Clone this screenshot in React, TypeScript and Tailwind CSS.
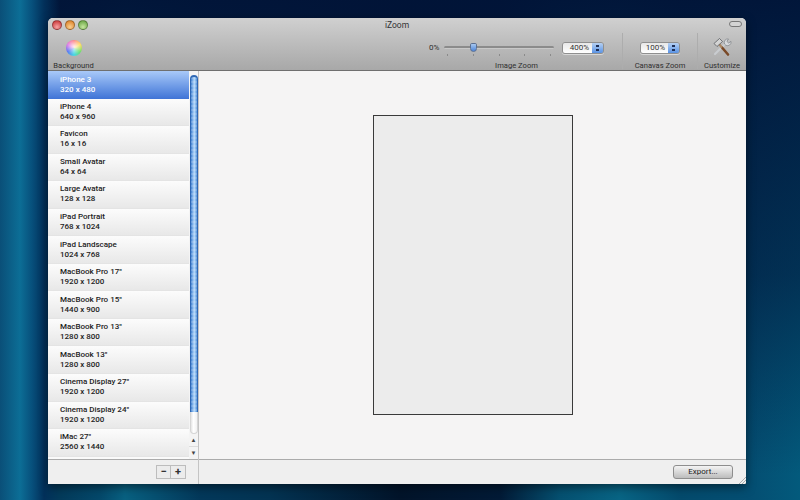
import React from "react";

const rows: [string, string][] = [
  ["iPhone 3", "320 x 480"],
  ["iPhone 4", "640 x 960"],
  ["Favicon", "16 x 16"],
  ["Small Avatar", "64 x 64"],
  ["Large Avatar", "128 x 128"],
  ["iPad Portrait", "768 x 1024"],
  ["iPad Landscape", "1024 x 768"],
  ['MacBook Pro 17"', "1920 x 1200"],
  ['MacBook Pro 15"', "1440 x 900"],
  ['MacBook Pro 13"', "1280 x 800"],
  ['MacBook 13"', "1280 x 800"],
  ['Cinema Display 27"', "1920 x 1200"],
  ['Cinema Display 24"', "1920 x 1200"],
  ['iMac 27"', "2560 x 1440"],
];

function Stepper({ value, width }: { value: string; width: string }) {
  return (
    <div className={`${width} h-[12px] flex rounded-[3px] overflow-hidden border border-[#8f8f8f] shadow-[0_1px_0_#d8d8d8]`}>
      <div className="flex-1 bg-gradient-to-b from-[#e8e8e8] to-white flex items-center justify-end pr-[3px] text-[8px] leading-none text-[#333]">
        {value}
      </div>
      <div className="w-[11px] bg-gradient-to-b from-[#b5d0f3] to-[#5a93e4] flex flex-col items-center justify-center gap-[2px]">
        <div className="w-[3px] h-[2px] bg-[#1f2f55]" />
        <div className="w-[3px] h-[2px] bg-[#1f2f55]" />
      </div>
    </div>
  );
}

function Light({ cls }: { cls: string }) {
  return <div className={`w-[10px] h-[10px] rounded-full border border-[#00000050] ${cls}`} />;
}

function Tools() {
  return (
    <svg width="22" height="20" viewBox="0 0 22 20">
      {/* wrench */}
      <path d="M4 17 L15 6" stroke="#c9ccd0" strokeWidth="2.2" strokeLinecap="round" />
      <path d="M13.5 7 a3.6 3.6 0 0 1 4 -5 l-1.6 2.4 l1.7 1.6 l2.4 -1.6 a3.6 3.6 0 0 1 -5 4 z" fill="#d8dadd" stroke="#70757b" strokeWidth="0.6" />
      {/* hammer */}
      <path d="M17 17.5 L11 10.5" stroke="#7a4a28" strokeWidth="2.6" strokeLinecap="round" />
      <path d="M11 10.5 L8 7" stroke="#a98662" strokeWidth="2.2" />
      <path d="M3 6.5 L8.5 1.5 L11.5 4.5 L6 9.5 Z" fill="#d4d4d4" stroke="#4a4d53" strokeWidth="0.7" />
    </svg>
  );
}

export default function App() {
  return (
    <div className="w-[800px] h-[500px] overflow-hidden pt-[18px] pl-[48px] bg-[linear-gradient(90deg,#0a4f78_0px,#0c6e96_20px,#07507c_32px,#02305a_44px,transparent_60px),linear-gradient(180deg,rgba(1,20,56,0.97)_0%,rgba(1,22,58,0.6)_55%,rgba(1,22,58,0)_95%),linear-gradient(90deg,#033a5a_60px,#04486a_100px,#086080_125px,#03385a_200px,#033352_270px,#02142a_400px,#021a36_500px,#055070_560px,#086484_620px,#044a6c_680px,#044e72_750px,#035a7c_800px)] font-['Roboto',sans-serif]">
      <div className="w-[698px] h-[466px] relative flex flex-col rounded-t-[5px] overflow-hidden bg-[#ececec] shadow-[0_3px_10px_rgba(0,0,0,0.5)]">
        {/* Toolbar */}
        <div className="h-[53px] shrink-0 flex flex-col bg-gradient-to-b from-[#d0d0d0] to-[#a8a8a8] border-b border-[#6f6f6f] text-[7.6px] text-[#2f2f2f]">
          <div className="h-[14px] flex items-center justify-between pl-[4px] pr-[4px] relative">
            <div className="flex gap-[3px]">
              <Light cls="bg-[radial-gradient(circle_at_50%_75%,#f7a3a3,#c4292c)]" />
              <Light cls="bg-[radial-gradient(circle_at_50%_75%,#fad08f,#d9771b)]" />
              <Light cls="bg-[radial-gradient(circle_at_50%_75%,#c6e79f,#5d9d38)]" />
            </div>
            <div className="absolute inset-x-0 text-center text-[8.5px] leading-none text-[#333]">iZoom</div>
            <div className="w-[13px] h-[6px] rounded-[3px] border border-[#777] bg-[#d4d4d4] mt-[-2px]" />
          </div>
          <div className="flex-1 flex items-stretch">
            <div className="w-[51px] flex flex-col items-center justify-between pt-[8px]">
              <div className="w-[16px] h-[16px] rounded-full bg-[radial-gradient(circle_at_50%_40%,#ffffffdd_0%,transparent_65%),conic-gradient(#ff6a6a,#ffd84a,#6fe06f,#4ad8e4,#5a7bf2,#dc68e4,#ff6a6a)]" />
              <div className="leading-[9px]">Background</div>
            </div>
            <div className="w-[330px]" />
            <div className="w-[193px] flex flex-col justify-between">
              <div className="flex items-start pt-[10px]">
                <span className="w-[15px] text-[8px] leading-[11px]">0%</span>
                <div className="w-[110px] mr-[8px] flex flex-col">
                  <div className="h-[11px] flex items-center relative">
                    <div className="w-full h-[3px] rounded-full bg-[#8b8b8b] border-b border-[#c8c8c8]" />
                    <div className="absolute left-[26px] top-[1px] w-[7px] h-[9px] bg-gradient-to-b from-[#a8c8f0] to-[#4f86d8] border border-[#5a6f92] rounded-t-[2px] rounded-b-[4px]" />
                  </div>
                  <div className="flex justify-between px-[3px] mt-[1px]">
                    {[0, 1, 2, 3, 4].map((i) => (
                      <div key={i} className="w-px h-[2px] bg-[#8a8a8a]" />
                    ))}
                  </div>
                </div>
                <Stepper value="400%" width="w-[42px]" />
              </div>
              <div className="leading-[9px] text-center pr-[18px]">Image Zoom</div>
            </div>
            <div className="w-px my-[1px] bg-[#adadad]" />
            <div className="w-[74px] flex flex-col items-center justify-between">
              <div className="pt-[10px]">
                <Stepper value="100%" width="w-[40px]" />
              </div>
              <div className="leading-[9px]">Canavas Zoom</div>
            </div>
            <div className="w-px my-[1px] bg-[#adadad]" />
            <div className="flex-1 flex flex-col items-center justify-between">
              <div className="pt-[5px]"><Tools /></div>
              <div className="leading-[9px]">Customize</div>
            </div>
          </div>
        </div>
        {/* Body */}
        <div className="flex-1 flex min-h-0">
          <div className="w-[151px] shrink-0 flex flex-col border-r border-[#c4c4c4]">
            <div className="h-[388px] flex min-h-0 overflow-hidden">
              <div className="w-[141px] flex flex-col bg-[#fafafa]">
                {rows.map(([a, b], i) => (
                  <div
                    key={a}
                    className={`h-[27.55px] shrink-0 pl-[12px] flex flex-col justify-center text-[8px] leading-[10px] font-medium ${
                      i === 0
                        ? "bg-gradient-to-b from-[#a9c9f8] to-[#3f73d6] text-white"
                        : "bg-gradient-to-b from-[#fcfcfc] to-[#e8e8e8] text-[#222] border-b border-[#e4e4e4]"
                    }`}
                  >
                    <div>{a}</div>
                    <div>{b}</div>
                  </div>
                ))}
              </div>
              <div className="w-[9px] flex flex-col bg-[#f4f4f4]">
                <div className="flex-1 pl-[1px] pt-[4px] flex flex-col">
                  <div className="h-[341px] shrink-0 rounded-full border-t-2 border-x border-b border-[#2f68b4] bg-[repeating-linear-gradient(0deg,rgba(255,255,255,0.15)_0px,rgba(255,255,255,0.15)_2px,transparent_2px,transparent_4px),linear-gradient(90deg,#3f80d0,#98c4f2_40%,#b0d6f8_60%,#4f8fd8)]" />
                  <div className="flex-1 -mt-[4px] -z-0 rounded-b-full bg-[linear-gradient(90deg,#e4e4e4,#ffffff_40%,#f2f2f2)] border-x border-b border-[#d5d5d5]" />
                </div>
                <div className="h-[13px] shrink-0 flex items-center justify-center text-[6px] leading-none text-[#444] border-b border-[#dcdcdc]">▲</div>
                <div className="h-[12px] shrink-0 flex items-center justify-center text-[6px] leading-none text-[#444]">▼</div>
              </div>
            </div>
            <div className="flex-1 flex items-center justify-end pr-[12px] pb-[1px] border-t border-[#ababab] bg-[#efefef]">
              <div className="flex border border-[#bdbdbd] bg-[#ececec] text-[11px] font-bold leading-none text-[#333] h-[14px]">
                <div className="w-[14px] flex items-center justify-center border-r border-[#bdbdbd]">−</div>
                <div className="w-[14px] flex items-center justify-center">+</div>
              </div>
            </div>
          </div>
          <div className="flex-1 flex flex-col min-w-0">
            <div className="h-[388px] bg-[#f5f4f4] flex pl-[174px] pt-[44px]">
              <div className="w-[200px] h-[300px] bg-[#ececec] border border-[#3a3a3a]" />
            </div>
            <div className="flex-1 flex items-center justify-end pr-[13px] pb-[1px] border-t border-[#ababab] bg-[#efefef]">
              <div className="w-[60px] h-[14px] rounded-[3px] border border-[#8e8e8e] bg-gradient-to-b from-[#f4f4f4] to-[#bdbdbd] flex items-center justify-center text-[8px] leading-none text-[#222]">
                Export...
              </div>
            </div>
          </div>
        </div>
        <svg className="absolute right-0 bottom-0" width="8" height="8" viewBox="0 0 8 8">
          <path d="M1 8 L8 1 M4 8 L8 4 M7 8 L8 7" stroke="#9a9a9a" strokeWidth="0.8" />
        </svg>
      </div>
    </div>
  );
}
